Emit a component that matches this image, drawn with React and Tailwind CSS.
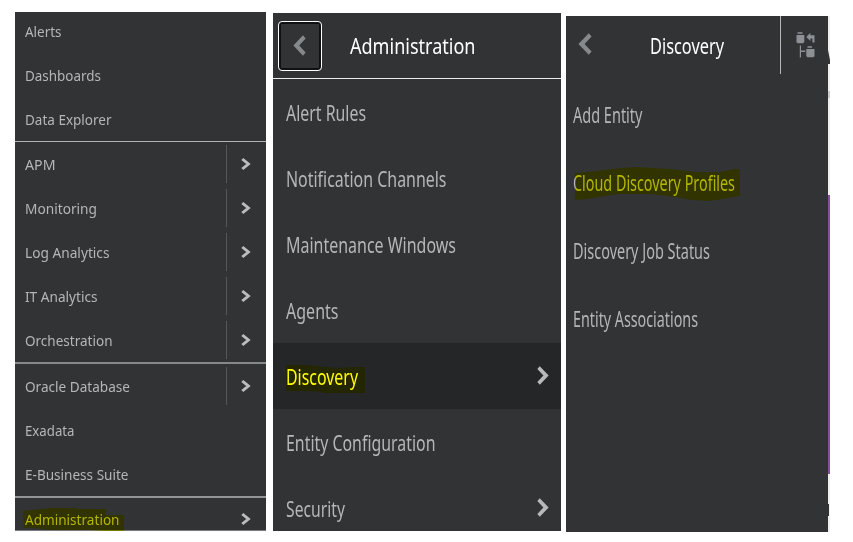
import { useLayoutEffect, useRef } from "react";

// Menu text condensed or widened to an exact line length.
function Label({ width, className = "", children }) {
  const ref = useRef(null);
  useLayoutEffect(() => {
    const el = ref.current;
    el.style.transform = "none";
    const natural = el.getBoundingClientRect().width;
    el.style.transform = `scaleX(${width / natural})`;
  }, [width]);
  return (
    <span ref={ref} className={`inline-block origin-left whitespace-nowrap ${className}`}>
      {children}
    </span>
  );
}

function Chevron({ left, className = "" }) {
  return (
    <svg viewBox="0 0 10 14" preserveAspectRatio="none" className={className} fill="none" stroke="currentColor" strokeWidth="3">
      <path d={left ? "M8.7 1.2 L2.5 7 L8.7 12.8" : "M1.3 1.2 L7.5 7 L1.3 12.8"} />
    </svg>
  );
}

function MainRow({ text, width, arrow, divider }) {
  return (
    <div className="flex h-11 shrink-0 items-center justify-between pl-[10px]">
      <Label width={width} className="text-[14px]">{text}</Label>
      {arrow && (
        <div className={`flex h-[38px] w-10 shrink-0 items-center border-l pb-[1px] pl-[14px] ${divider ? "border-[#55585a]" : "border-transparent"}`}>
          <Chevron className="h-[12px] w-[10px] text-[#babcbd]" />
        </div>
      )}
    </div>
  );
}

function MainMenu() {
  return (
    <nav className="relative mt-3 ml-[15px] flex h-[519px] w-[251px] shrink-0 flex-col overflow-hidden bg-[#313334] text-[#b4b6b7]">
      <div className="-mt-[3px]">
        <MainRow text="Alerts" width={36.5} />
        <MainRow text="Dashboards" width={76} />
        <MainRow text="Data Explorer" width={86.5} />
      </div>
      <div className="h-px shrink-0 bg-[#b2b3b4]" />
      <div>
        <MainRow text="APM" width={30.5} arrow divider />
        <MainRow text="Monitoring" width={72} arrow divider />
        <MainRow text="Log Analytics" width={84.5} arrow divider />
        <MainRow text="IT Analytics" width={72.5} arrow divider />
        <MainRow text="Orchestration" width={87.5} arrow divider />
      </div>
      <div className="h-[2px] shrink-0 bg-[#85888a]" />
      <div>
        <MainRow text="Oracle Database" width={105} arrow divider />
        <MainRow text="Exadata" width={49.5} />
        <MainRow text="E-Business Suite" width={103.5} />
      </div>
      <div className="h-[2px] shrink-0 bg-[#929495]" />
      <div className="-mt-px">
        <MainRow text="Administration" width={94.5} arrow />
      </div>
      <div className="absolute bottom-0 left-0 h-px w-full bg-[#77797a]" />
      <svg className="absolute top-[496px] left-[8px] h-[23px] w-[103px] mix-blend-multiply" viewBox="0 0 103 23">
        <path fill="#ffff00" d="M0 3 L18 1 L29 0 H54 V1 H83 V7 H101 V23 H84 L66 22 H27 L12 20 H1 Z" />
      </svg>
    </nav>
  );
}

function AdminRow({ text, width, arrow, active }) {
  return (
    <div className={`flex h-[66px] shrink-0 items-center justify-between pt-[4px] pr-3 pl-[13px] ${active ? "bg-[#242627] text-white" : "text-[#b4b6b7]"}`}>
      <Label width={width} className="text-[21px]">{text}</Label>
      {arrow && <Chevron className="mb-[5px] h-[19px] w-[12px] shrink-0 text-[#b8b9ba]" />}
    </div>
  );
}

function AdminMenu() {
  return (
    <nav className="relative mt-[13px] ml-[7px] flex h-[518px] w-[288px] shrink-0 flex-col overflow-hidden bg-[#313334]">
      <div className="flex h-[66px] shrink-0 items-center border-b border-[#eeeeee] pl-[5px]">
        <button className="flex h-[50px] w-11 items-center justify-center rounded-[4px] border border-white ring-2 ring-[#101112] ring-inset">
          <Chevron left className="mr-[2px] mb-[1px] h-[21px] w-[13px] text-[#85898c]" />
        </button>
        <Label width={125.5} className="ml-7 text-[22.5px] text-white">Administration</Label>
      </div>
      <AdminRow text="Alert Rules" width={80} />
      <AdminRow text="Notification Channels" width={160.5} />
      <AdminRow text="Maintenance Windows" width={170} />
      <AdminRow text="Agents" width={52.5} />
      <AdminRow text="Discovery" width={72} arrow active />
      <AdminRow text="Entity Configuration" width={149.5} />
      <AdminRow text="Security" width={59} arrow />
      <svg className="absolute top-[352px] left-[13px] h-7 w-[79px] mix-blend-multiply" viewBox="0 0 79 28">
        <path fill="#ffff00" d="M0 0 H15 L29 1 L51 3 L66 2 H79 V28 H36 V27 L16 26 H0 Z" />
      </svg>
    </nav>
  );
}

function DiscoveryRow({ text, width }) {
  return (
    <div className="flex h-[68px] shrink-0 items-center pt-[1px] pl-[7px]">
      <Label width={width} className="text-[21.5px]">{text}</Label>
    </div>
  );
}

function TreeIcon() {
  return (
    <svg className="h-[26px] w-5" viewBox="0 0 20 26" fill="#8d9195">
      <path d="M1.5 0.3 H6.5 V1.7 H1.5 Z M0.5 3 H8.3 V10.5 H7.4 V11.2 H1.4 V10.5 H0.5 Z" />
      <path d="M10.3 5 L14.4 0.8 V3.2 H18.5 V10.5 H16.4 V6.5 H14.4 V9 Z" />
      <path d="M3.8 13.5 H5 V18.5 H9.3 V20 H5 V25.5 H3.8 Z" />
      <path d="M11.5 14.3 H16 V15.7 H11.5 Z M10.3 17 H18.5 V24.5 H17.6 V25.3 H11.2 V24.5 H10.3 Z" />
    </svg>
  );
}

function DiscoveryMenu() {
  return (
    <nav className="relative mt-4 ml-[5px] flex h-[516px] w-[262px] shrink-0 flex-col bg-[#313334] text-[#b4b6b7]">
      <div className="mb-[7px] flex h-[58px] shrink-0 items-center">
        <Chevron left className="mb-[2px] ml-[12px] h-[22px] w-[14px] shrink-0 text-[#85898c]" />
        <div className="ml-[58px] w-[130px] shrink-0 pt-[2px]">
          <Label width={74} className="text-[22.5px] text-white">Discovery</Label>
        </div>
        <div className="flex h-full grow items-center border-l border-[#b5b6b7] pl-[15px]">
          <TreeIcon />
        </div>
      </div>
      <DiscoveryRow text="Add Entity" width={69.5} />
      <DiscoveryRow text="Cloud Discovery Profiles" width={162} />
      <DiscoveryRow text="Discovery Job Status" width={137} />
      <DiscoveryRow text="Entity Associations" width={125} />
      <svg className="absolute top-[151px] left-[9px] h-[34px] w-[166px] mix-blend-multiply" viewBox="0 0 166 34">
        <path fill="#ffff00" d="M0 6 L22 4 L45 1 L62 0 L95 2 L121 5 H145 L160 2 H165 V29 L147 32 L134 34 L118 33 L94 29 L75 27 L43 27 L24 30 L13 32 L0 33 Z" />
      </svg>
    </nav>
  );
}

// Sliver of the page content behind the open menu.
function PageEdge() {
  return (
    <div className="mt-4 flex h-[516px] w-[2px] shrink-0 flex-col bg-[#f1efed]">
      <svg className="mt-[34px] h-[14px] w-[2px] shrink-0" viewBox="0 0 2 14">
        <path d="M0 0 L2 10 V14 H0 Z" fill="#333536" />
      </svg>
      <div className="mt-[27px] h-[7px] shrink-0 bg-[#cccccc]" />
      <div className="mt-[97px] h-[279px] shrink-0 bg-[#894ea2]" />
      <div className="mt-[30px] h-[12px] w-px shrink-0 bg-[#333536]" />
    </div>
  );
}

export default function App() {
  return (
    <div className="flex h-[542px] w-[853px] items-start overflow-hidden bg-white font-['Noto_Sans','Open_Sans',sans-serif]">
      <MainMenu />
      <AdminMenu />
      <DiscoveryMenu />
      <PageEdge />
    </div>
  );
}
